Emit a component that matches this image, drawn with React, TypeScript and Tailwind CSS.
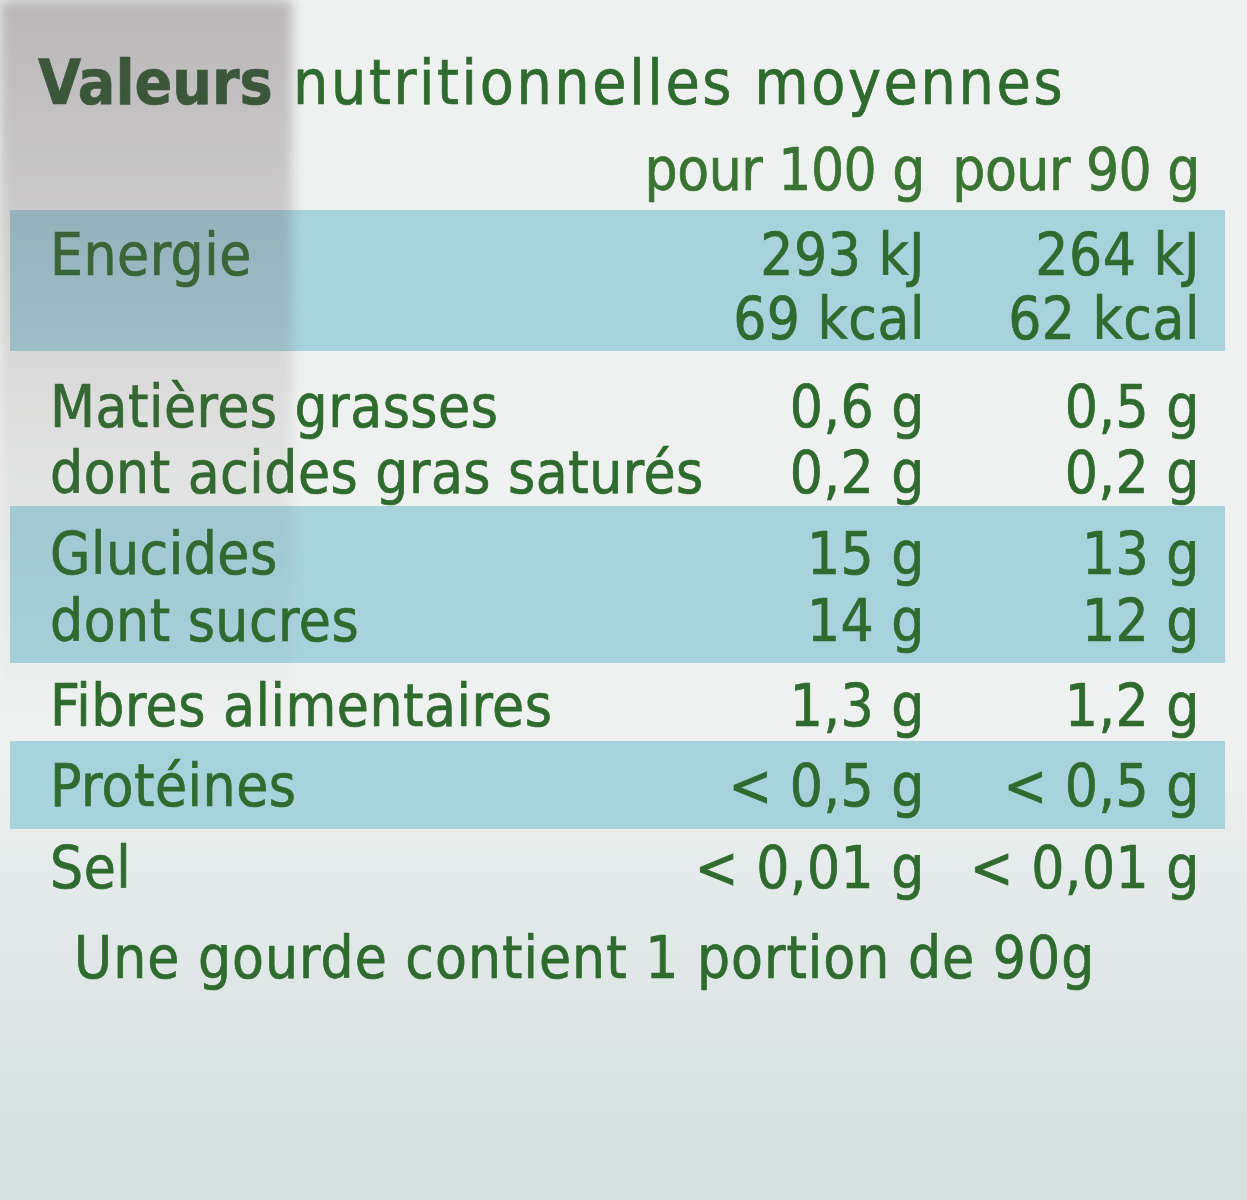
import React from 'react';

interface Row {
  label: string;
  per100: string;
  perPortion: string;
}

interface Block {
  id: string;
  className: string;
  lineClass: string;
  rows: Row[];
}

// each block is a band of the label; tinted ones get the light blue fill
const blocks: Block[] = [
  {
    id: 'energie',
    className: 'mt-[7px] bg-[#a8d2dc] pt-[13px] pb-0',
    lineClass: 'leading-[64px]',
    rows: [
      { label: 'Energie', per100: '293 kJ', perPortion: '264 kJ' },
      { label: '', per100: '69 kcal', perPortion: '62 kcal' }
    ]
  },
  {
    id: 'lipides',
    className: 'mt-[23px]',
    lineClass: 'leading-[66px]',
    rows: [
      { label: 'Matières grasses', per100: '0,6 g', perPortion: '0,5 g' },
      { label: 'dont acides gras saturés', per100: '0,2 g', perPortion: '0,2 g' }
    ]
  },
  {
    id: 'glucides',
    className: 'mt-0 bg-[#a8d2dc] pt-[15px] pb-[8px]',
    lineClass: 'leading-[67px]',
    rows: [
      { label: 'Glucides', per100: '15 g', perPortion: '13 g' },
      { label: 'dont sucres', per100: '14 g', perPortion: '12 g' }
    ]
  },
  {
    id: 'fibres',
    className: 'mt-[10px]',
    lineClass: 'leading-[66px]',
    rows: [{ label: 'Fibres alimentaires', per100: '1,3 g', perPortion: '1,2 g' }]
  },
  {
    id: 'proteines',
    className: 'mt-[2px] bg-[#a8d2dc] pt-[12px] pb-[10px]',
    lineClass: 'leading-[66px]',
    rows: [{ label: 'Protéines', per100: '< 0,5 g', perPortion: '< 0,5 g' }]
  },
  {
    id: 'sel',
    className: 'mt-[6px]',
    lineClass: 'leading-[66px]',
    rows: [{ label: 'Sel', per100: '< 0,01 g', perPortion: '< 0,01 g' }]
  }
];

export default function App() {
  return (
    <div
      className="relative w-[1247px] h-[1200px] overflow-hidden bg-[linear-gradient(180deg,#eef1ef_0%,#eef1ef_62%,#e2e9e9_76%,#d5dfe0_100%)] text-[#2f6b2e] [-webkit-text-stroke:0.7px_currentColor]"
      style={{ fontFamily: '"DejaVu Sans Condensed", "Liberation Sans Narrow", "Open Sans", sans-serif' }}
    >
      <div className="pt-[50px]">
        <h1 className="pl-[38px] text-[62px] leading-[66px] tracking-[2.6px] whitespace-nowrap">
          <span className="font-bold text-[#2b5a2c] tracking-[0px]">Valeurs</span> nutritionnelles moyennes
        </h1>

        <div className="mt-[21px] ml-[10px] w-[1215px] pl-[40px] pr-[25px] grid grid-cols-[minmax(0,1fr)_285px_275px] text-[58px] leading-[66px] tracking-[-0.5px] text-[#3a7433]">
          <span />
          <span className="text-right whitespace-nowrap">pour 100 g</span>
          <span className="text-right whitespace-nowrap">pour 90 g</span>
        </div>

        <div className="flex flex-col">
          {blocks.map((block) => (
            <div key={block.id} className={`ml-[10px] w-[1215px] pl-[40px] pr-[25px] ${block.className}`}>
              {block.rows.map((row, index) => (
                <div
                  key={index}
                  className={`grid grid-cols-[minmax(0,1fr)_280px_275px] text-[58px] tracking-[0.5px] ${block.lineClass}`}
                >
                  <span className="whitespace-nowrap">{row.label}</span>
                  <span className="text-right whitespace-nowrap">{row.per100}</span>
                  <span className="text-right whitespace-nowrap">{row.perPortion}</span>
                </div>
              ))}
            </div>
          ))}
        </div>

        <p className="mt-[24px] pl-[74px] text-[58px] leading-[66px] tracking-[1px] whitespace-nowrap">
          Une gourde contient 1 portion de 90g
        </p>
      </div>

      {/* shadow cast across the left of the photo */}
      <div className="pointer-events-none absolute left-0 top-0 h-[720px] w-[292px] bg-[linear-gradient(180deg,rgba(95,80,88,0.36)_0%,rgba(95,80,88,0.24)_30%,rgba(95,80,88,0.1)_60%,rgba(95,80,88,0)_100%)] blur-[6px]" />
    </div>
  );
}
